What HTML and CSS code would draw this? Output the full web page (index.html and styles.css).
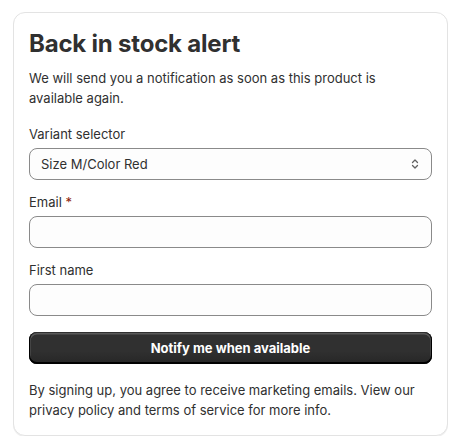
FILE: index.html
```html
<!DOCTYPE html>
<html lang="en">
<head>
<meta charset="utf-8">
<title>Back in stock alert</title>
<link rel="stylesheet" href="styles.css">
</head>
<body>
<div class="page">
  <section class="card">
    <h1 class="title">Back in stock alert</h1>
    <p class="intro">We will send you a notification as soon as this product is available again.</p>
    <form class="form">
      <div class="field">
        <label class="label">Variant selector</label>
        <div class="select">
          <span class="select-value">Size M/Color Red</span>
          <svg class="select-icon" viewBox="0 0 20 20" width="20" height="20" aria-hidden="true">
            <path d="M7.5 8.5 10 6l2.5 2.5" fill="none" stroke="#616161" stroke-width="1.3" stroke-linecap="round" stroke-linejoin="round"/>
            <path d="M7.5 11.5 10 14l2.5-2.5" fill="none" stroke="#616161" stroke-width="1.3" stroke-linecap="round" stroke-linejoin="round"/>
          </svg>
        </div>
      </div>
      <div class="field">
        <label class="label">Email <span class="req">*</span></label>
        <input class="input" type="text">
      </div>
      <div class="field">
        <label class="label">First name</label>
        <input class="input" type="text">
      </div>
      <button class="button" type="button">Notify me when available</button>
    </form>
    <p class="note">By signing up, you agree to receive marketing emails. View our privacy policy and terms of service for more info.</p>
  </section>
</div>
</body>
</html>
```
FILE: styles.css
```css
* { box-sizing: border-box; }
html, body { margin: 0; background: #ffffff; }
body {
  font-family: Inter, "Noto Sans", "Liberation Sans", sans-serif;
  color: #303030;
  font-size: 13px;
  line-height: 20px;
}
.page { padding: 12px 13px 0; }
.card {
  width: 435px;
  background: #fff;
  border: 1px solid #e3e3e3;
  border-radius: 12px;
  box-shadow: 0 1px 0 rgba(26,26,26,0.07);
  padding: 15px;
  display: flex;
  flex-direction: column;
}
.title {
  margin: 0;
  font-size: 24px;
  line-height: 32px;
  font-weight: 700;
  letter-spacing: -0.2px;
}
.intro { margin: 8px 0 0; }
.form {
  margin-top: 16px;
  display: flex;
  flex-direction: column;
  gap: 12px;
}
.field { display: flex; flex-direction: column; gap: 4px; }
.label { display: block; }
.req { color: #8e1f0b; }
.select, .input {
  height: 32px;
  border: 1px solid #8a8a8a;
  border-radius: 8px;
  background: #fdfdfd;
  width: 100%;
  font: inherit;
}
.select {
  display: flex;
  align-items: center;
  justify-content: space-between;
  padding: 0 6px 0 11px;
}
.select-icon { display: block; }
.button {
  margin-top: 4px;
  height: 32px;
  width: 100%;
  border: none;
  border-radius: 8px;
  background: linear-gradient(180deg, #303030 0%, #303030 60%, #262626 100%);
  box-shadow: inset 0 -1px 0 1px #000, inset 0 0 0 1px #303030, inset 0 1px 0 1.5px rgba(255,255,255,0.2);
  color: #fff;
  font: inherit;
  font-weight: 650;
  cursor: pointer;
}
.note { margin: 16px 0 0; }
```
